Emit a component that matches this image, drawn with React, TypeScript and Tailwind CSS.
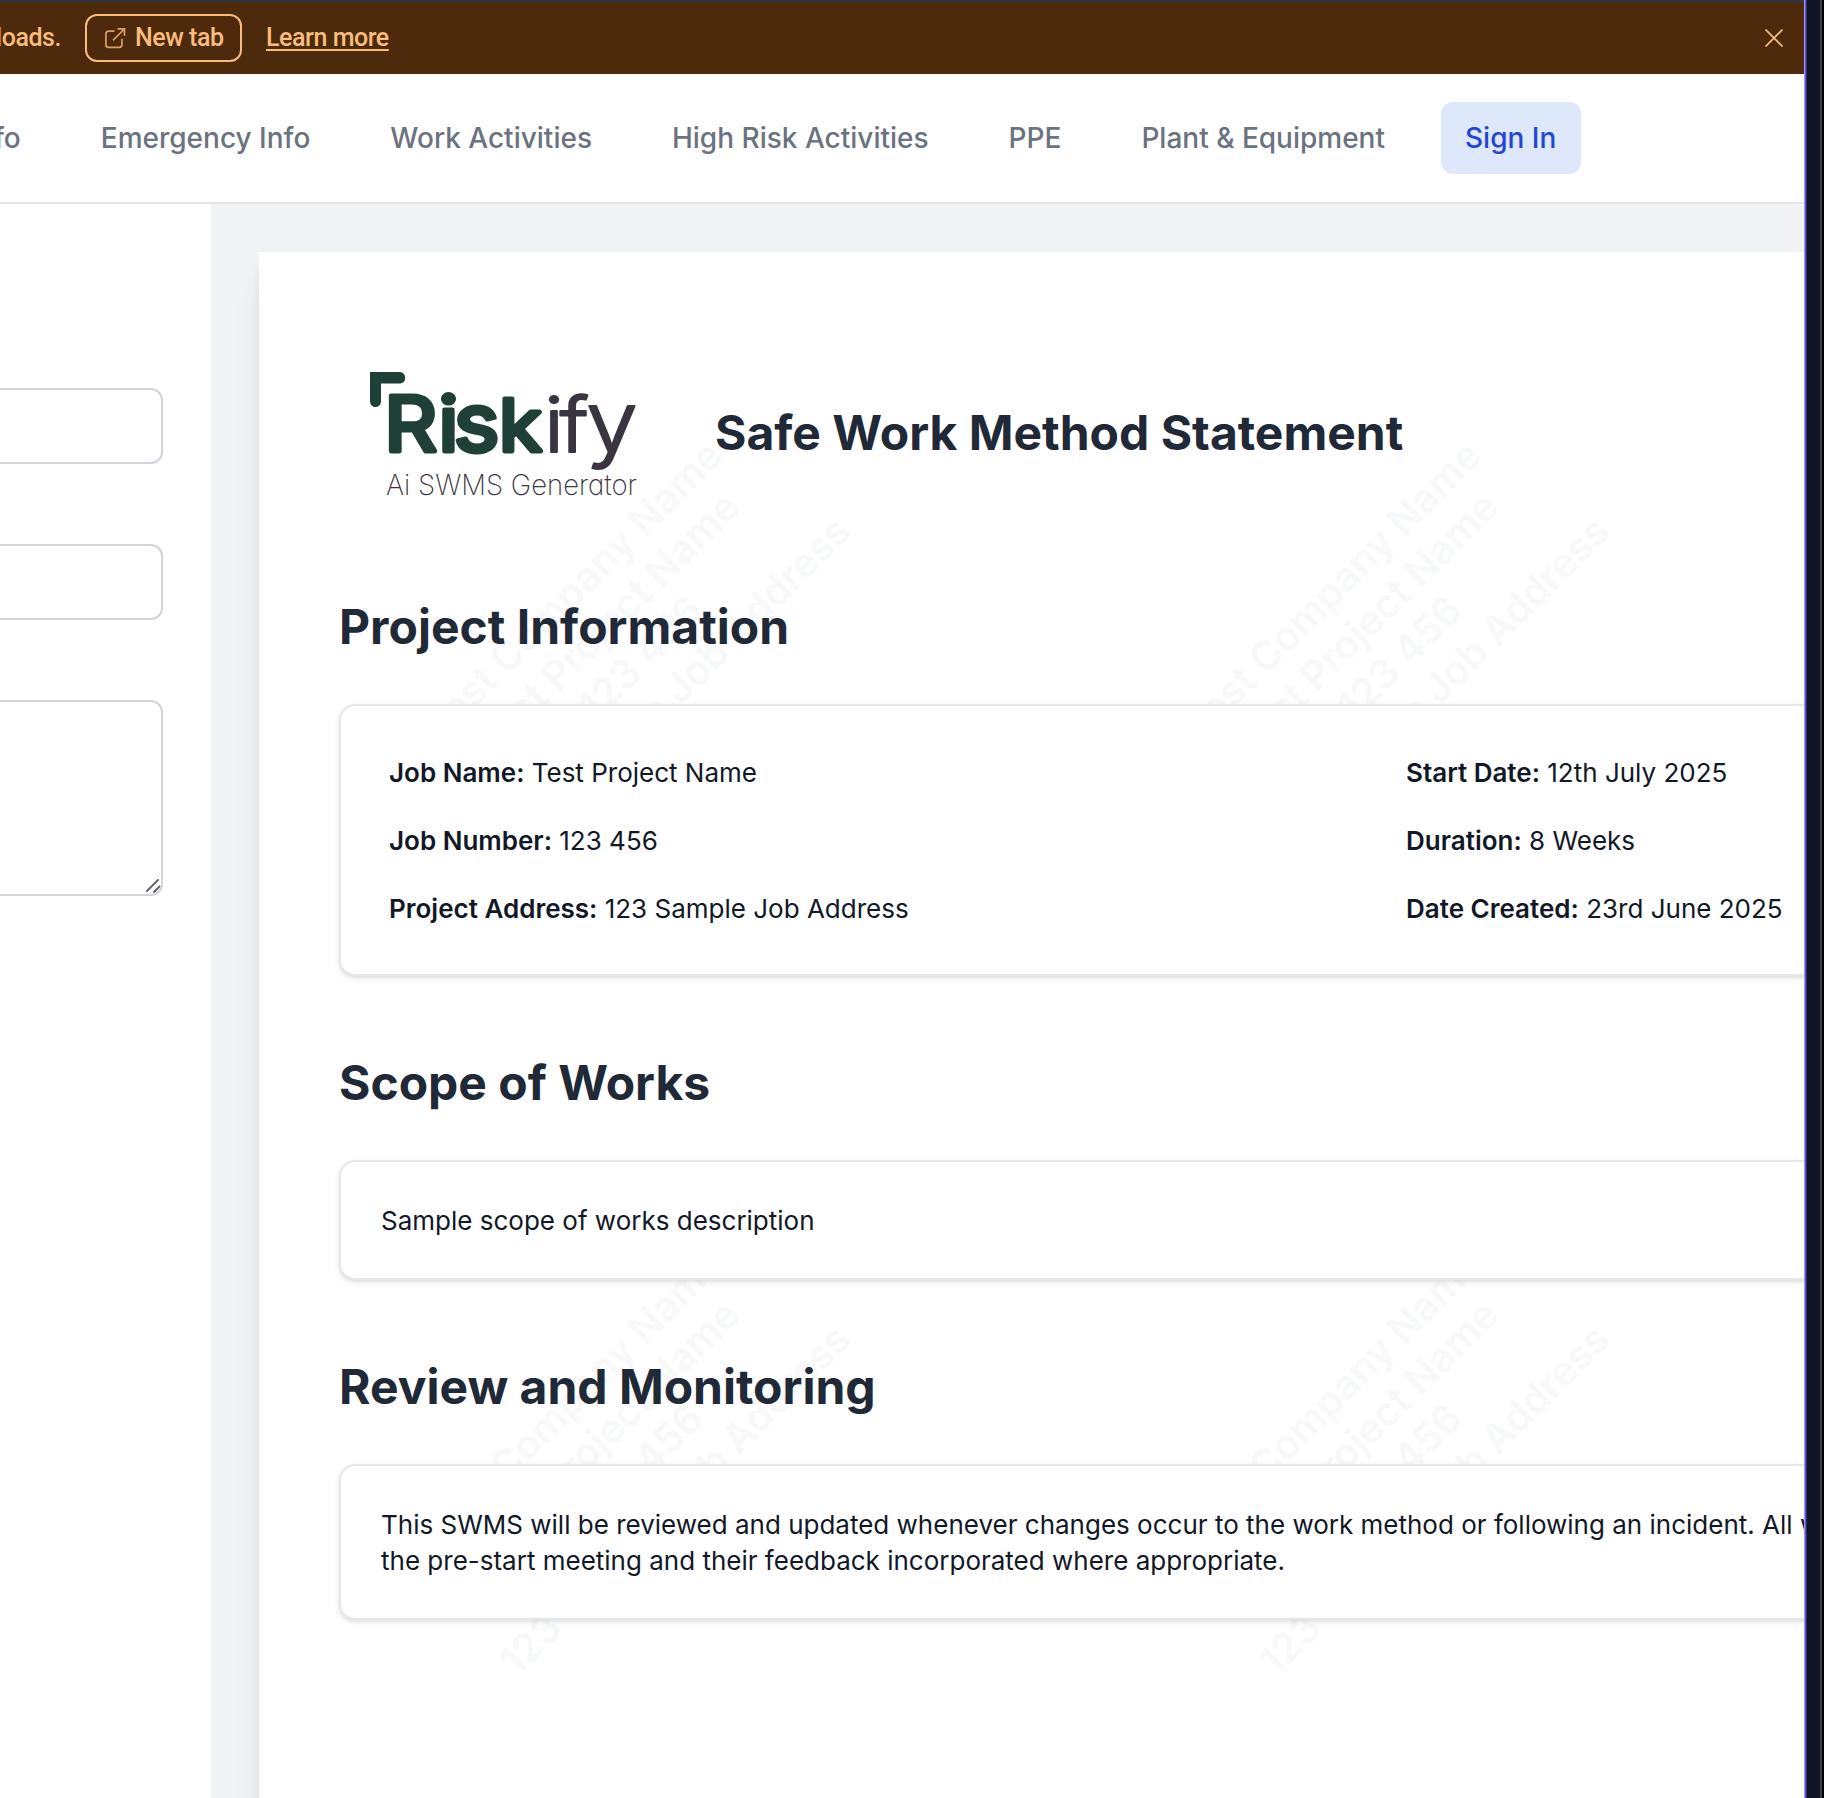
import React from "react";

const navItems = ["Project Info", "Emergency Info", "Work Activities", "High Risk Activities", "PPE", "Plant & Equipment"];

const details = [
  ["Job Name:", "Test Project Name"],
  ["Start Date:", "12th July 2025"],
  ["Job Number:", "123 456"],
  ["Duration:", "8 Weeks"],
  ["Project Address:", "123 Sample Job Address"],
  ["Date Created:", "23rd June 2025"],
];

function Banner() {
  return (
    <div className="flex h-[74px] shrink-0 items-center border-t-2 border-[#2f3447] bg-[#4d2a0c] font-['Roboto',sans-serif] text-[25px] font-medium tracking-[-0.45px] text-[#f8bd7e]">
      <div className="flex w-[61px] shrink-0 justify-end overflow-hidden pb-px whitespace-nowrap">
        <span>Preview does not support downloads.</span>
      </div>
      <button className="ml-6 flex h-12 w-[157px] shrink-0 items-center rounded-xl border-2 border-[#f8bd7e] pl-[17px]">
        <svg className="mr-[9px] h-[22px] w-[22px]" viewBox="0 0 22 22" fill="none" stroke="#d9a068" strokeWidth="1.7">
          <path d="M10.500 4.200H4.500a2.600 2.600 0 0 0-2.600 2.600v11a2.600 2.600 0 0 0 2.600 2.600h10.800a2.600 2.600 0 0 0 2.600-2.600v-6M13.500 1.800h7v7M20.300 2 9 13.300" />
        </svg>
        <span className="pb-px whitespace-nowrap">New tab</span>
      </button>
      <a className="ml-6 pb-px whitespace-nowrap underline decoration-2 underline-offset-[3px]">Learn more</a>
      <svg className="mr-[21px] ml-auto h-[18px] w-[18px]" viewBox="0 0 18 18" stroke="#f3b87c" strokeWidth="1.8">
        <path d="M0.500 0.500 17.500 17.500M17.500 0.500 0.500 17.500" />
      </svg>
    </div>
  );
}

function Nav() {
  return (
    <div className="flex h-[130px] shrink-0 items-center justify-end gap-8 overflow-hidden border-b-2 border-[#e5e5e5] bg-white pr-[223px] text-[28px] font-medium whitespace-nowrap text-[#6b7280]">
      {navItems.map((n) => (
        <span key={n} className="shrink-0 px-6">{n}</span>
      ))}
      <span className="flex h-[72px] w-[140px] shrink-0 items-center rounded-xl bg-[#dde8fb] pl-6 text-[#2546d2]">Sign In</span>
    </div>
  );
}

function FormPanel() {
  return (
    <div className="flex w-[211px] shrink-0 flex-col gap-20 overflow-hidden bg-white pt-[184px] pr-12">
      <div className="-ml-4 h-[76px] rounded-xl border-2 border-[#d1d5db]" />
      <div className="-ml-4 h-[76px] rounded-xl border-2 border-[#d1d5db]" />
      <div className="-ml-4 flex h-[196px] items-end justify-end rounded-xl border-2 border-[#d1d5db]">
        <svg className="h-4 w-4" viewBox="0 0 16 16" stroke="#666" strokeWidth="2" strokeLinecap="round">
          <path d="M2 13 13 2M9 14 14.500 8.500" />
        </svg>
      </div>
    </div>
  );
}

function Logo() {
  return (
    <svg className="absolute top-[120px] left-[111px] h-[130px] w-[272px] overflow-visible" viewBox="0 0 272 130">
      <path d="M0 0H30a5 5 0 0 1 5 5.500a5 5 0 0 1-5 6H11V29.500a5.500 5.500 0 0 1-11 0Z" fill="#1f4037" />
      <g fontFamily="Inter, sans-serif" strokeLinejoin="round">
        <text transform="scale(1.08 1)" y="79" fontSize="76" fontWeight="400" fill="#1f4037" stroke="#1f4037" strokeWidth="4.800">
          <tspan x="13.200 63.500">Ri</tspan><tspan x="77.500" fontSize="80">s</tspan><tspan x="119.500" fontSize="72">k</tspan>
        </text>
        <text transform="scale(1.1 1)" y="80" fontSize="76" fontWeight="300" fill="#3a3541" stroke="#3a3541" strokeWidth="2">
          <tspan x="158.500 172.500">if</tspan><tspan x="196.500" fontSize="84">y</tspan>
        </text>
        <text x="16" y="122.500" fontSize="28.500" fontWeight="200" fill="#3a3541" textLength="251" style={{ fontFeatureSettings: "'cv11'" }} lengthAdjust="spacingAndGlyphs">Ai SWMS Generator</text>
      </g>
    </svg>
  );
}

function Watermark({ className }: { className: string }) {
  return (
    <div className={`absolute flex h-[240px] w-[520px] -rotate-45 flex-col items-center justify-center text-[40px] leading-[48px] font-semibold whitespace-nowrap text-[#f7f8fa] ${className}`}>
      <span>Test Company Name</span>
      <span>Test Project Name</span>
      <span>123 456</span>
      <span>123 Sample Job Address</span>
    </div>
  );
}

function Section({ title, className, children }: { title: string; className: string; children: React.ReactNode }) {
  return (
    <section>
      <h2 className="text-[48px] leading-[56px] font-bold text-[#1f2937]">{title}</h2>
      <div className={`mt-[49px] rounded-2xl border-2 border-[#e5e7eb] bg-white shadow-[0_2px_6px_rgba(0,0,0,0.1),0_2px_4px_-2px_rgba(0,0,0,0.1)] ${className}`}>{children}</div>
    </section>
  );
}

function Document() {
  return (
    <div className="relative -mb-12 h-[1700px] w-[2294px] bg-white px-20 shadow-[0_20px_30px_-6px_rgba(0,0,0,0.1),0_8px_12px_-4px_rgba(0,0,0,0.1)]">
      <Watermark className="top-[269px] left-[105px]" />
      <Watermark className="top-[269px] left-[864px]" />
      <Watermark className="top-[1077px] left-[105px]" />
      <Watermark className="top-[1077px] left-[864px]" />
      <Logo />
      <div className="relative">
        <h1 className="ml-[376px] pt-[153px] text-[48px] leading-[56px] font-bold text-[#1f2937]">Safe Work Method Statement</h1>
        <div className="mt-[138px] flex flex-col gap-[79px] text-[26px] text-[#111827]">
          <Section title="Project Information" className="grid h-[272px] grid-cols-2 content-center gap-y-8 px-12 pt-0.5">
            {details.map(([k, v]) => (
              <p key={k} className="leading-9">
                <span className="font-semibold">{k}</span> {v}
              </p>
            ))}
          </Section>
          <Section title="Scope of Works" className="px-10 pt-[41px] pb-[39px]">
            <p className="leading-9">Sample scope of works description</p>
          </Section>
          <Section title="Review and Monitoring" className="h-[156px] px-10 pt-[41px]">
            <p className="leading-9 whitespace-nowrap">
              This SWMS will be reviewed and updated whenever changes occur to the work method or following an incident. All workers will be consulted
              <br />
              the pre-start meeting and their feedback incorporated where appropriate.
            </p>
          </Section>
        </div>
      </div>
    </div>
  );
}

export default function App() {
  return (
    <div className="flex h-[1798px] w-[1824px] overflow-hidden bg-black font-['Inter',sans-serif]">
      <div className="flex w-[1804px] shrink-0 flex-col overflow-hidden bg-white">
        <Banner />
        <Nav />
        <div className="flex min-h-0 flex-1">
          <FormPanel />
          <div className="min-w-0 flex-1 overflow-hidden bg-[#f2f3f5] pt-12 pl-12">
            <Document />
          </div>
        </div>
      </div>
      <div className="w-px shrink-0 bg-[#a096f6]" />
      <div className="w-px shrink-0 bg-[#6354d2]" />
      <div className="w-px shrink-0 bg-[#332c78]" />
      <div className="w-[15px] shrink-0 border-r-2 border-[#3c3c42] bg-[#101423]" />
    </div>
  );
}
